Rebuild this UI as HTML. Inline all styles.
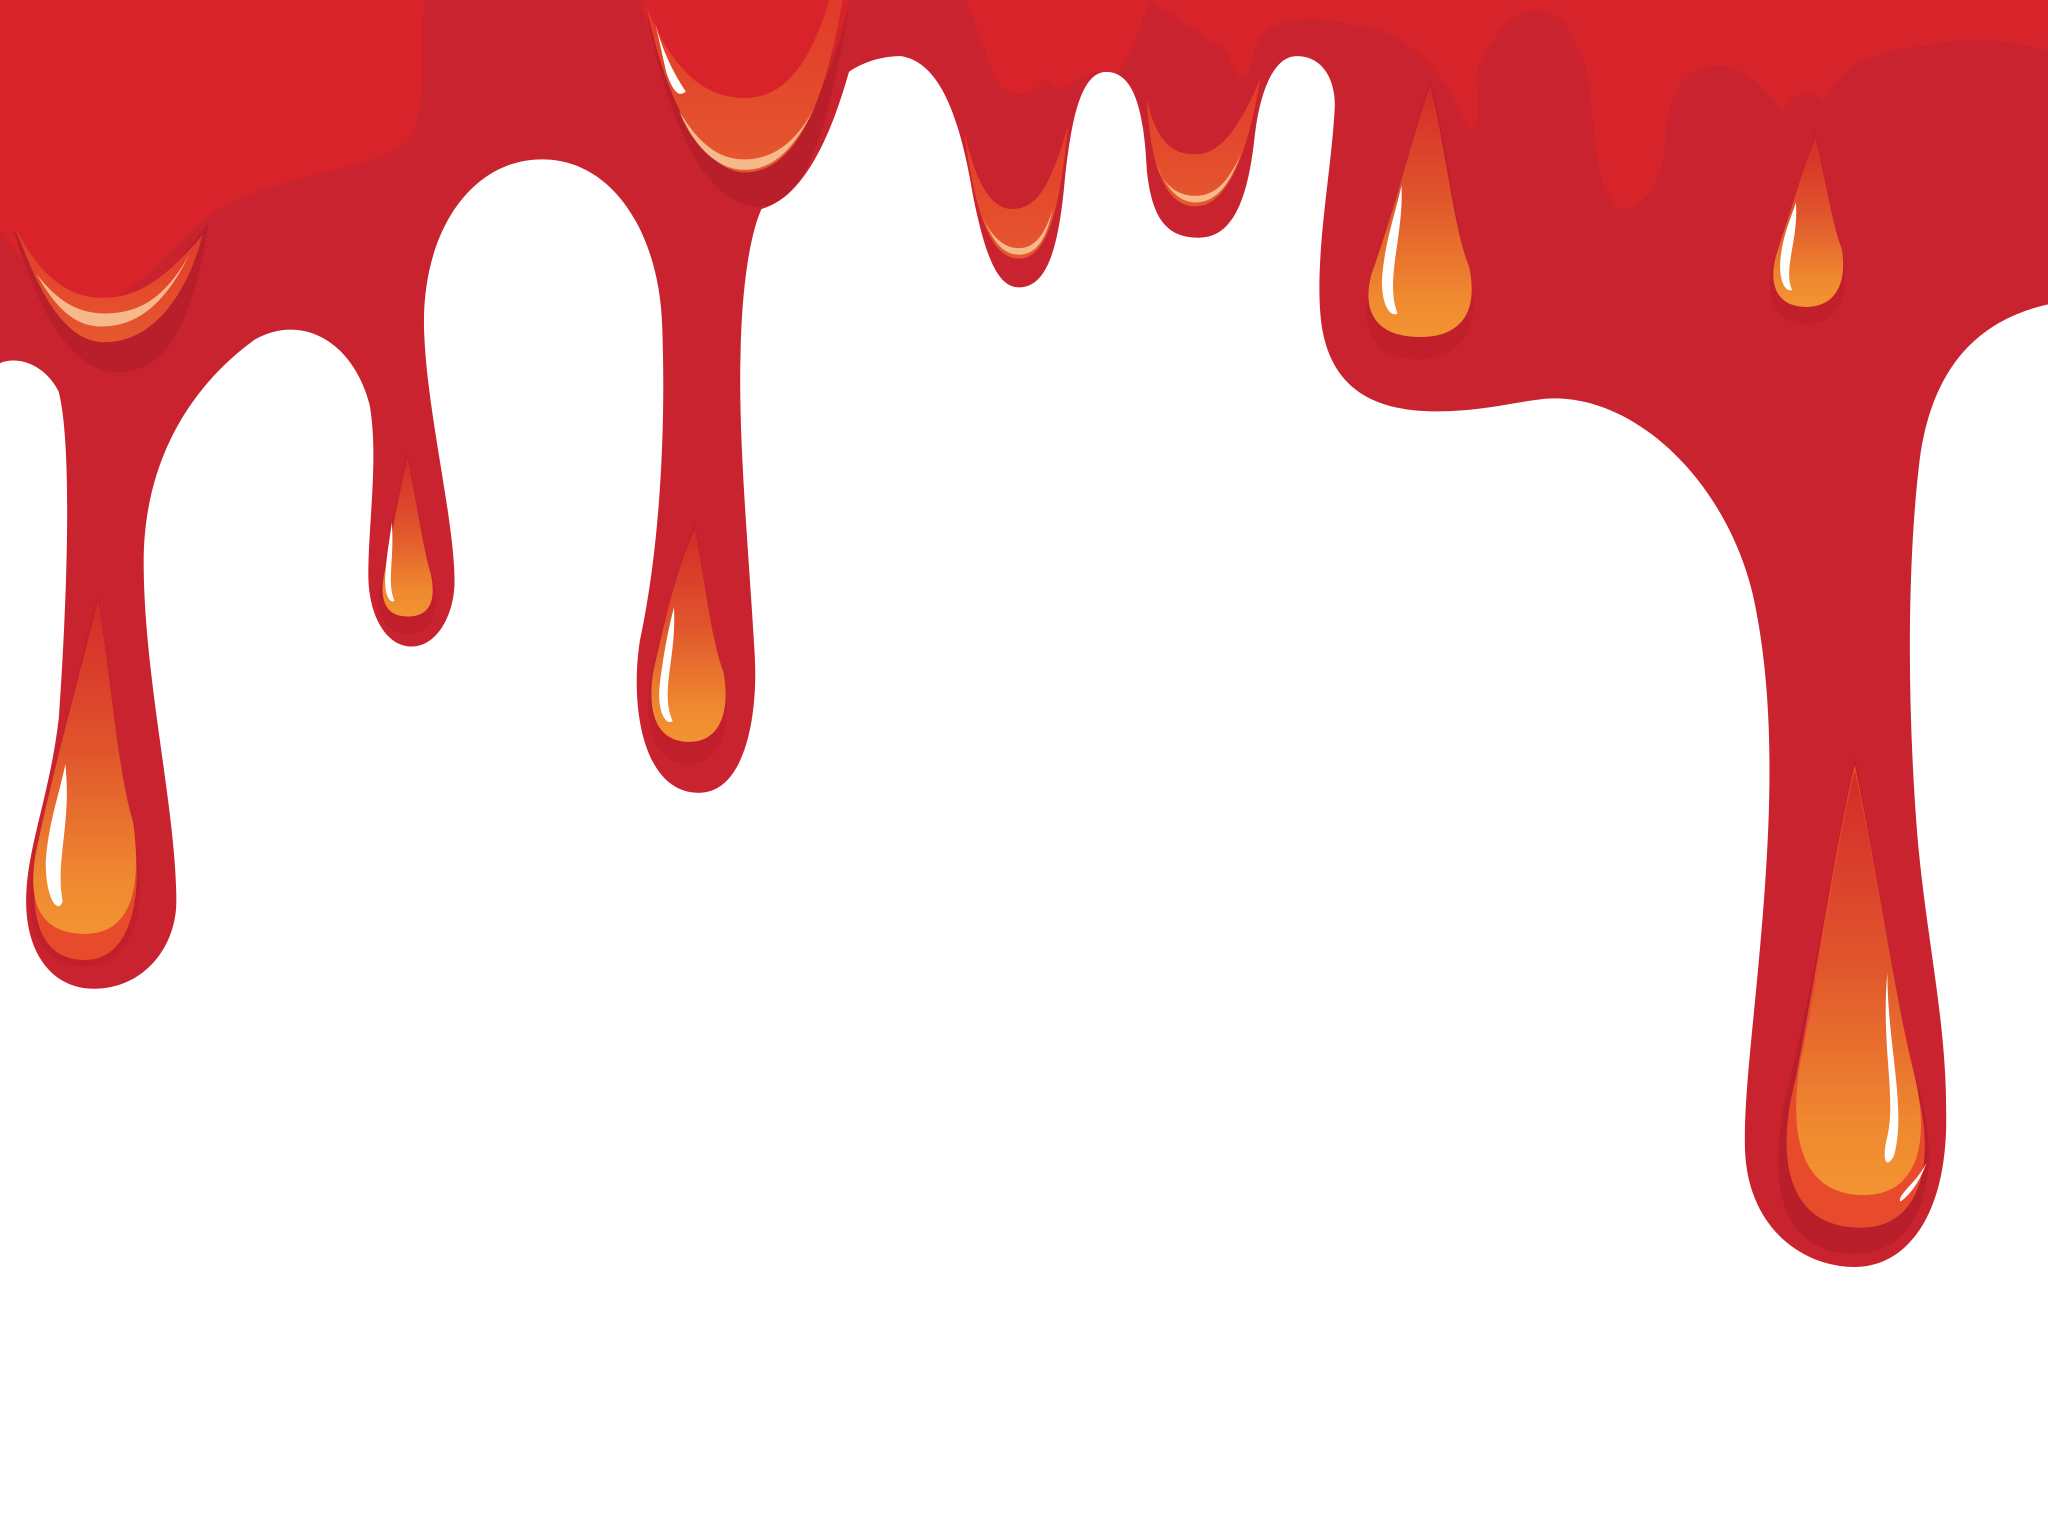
<!DOCTYPE html>
<html><head><meta charset="utf-8"><style>
html,body{margin:0;padding:0;background:#fff;width:2048px;height:1536px;overflow:hidden}
svg{display:block}
</style></head><body>
<svg width="2048" height="1536" viewBox="0 0 1568 1176" preserveAspectRatio="none" xmlns="http://www.w3.org/2000/svg">
<defs>
<linearGradient id="og" x1="0" y1="0" x2="0" y2="1">
<stop offset="0" stop-color="#d42a2a"/>
<stop offset="0.45" stop-color="#e0552c"/>
<stop offset="0.85" stop-color="#f08a30"/>
<stop offset="1" stop-color="#f29332"/>
</linearGradient>
<linearGradient id="bowl" x1="0" y1="0" x2="0" y2="1">
<stop offset="0" stop-color="#e23a2a"/>
<stop offset="1" stop-color="#e5582e"/>
</linearGradient>
</defs>
<path fill="#c9232f" d="M0,278 C15,272 35,280 45,300 C55,340 52,450 45,550 C38,610 20,650 20,690 C20,730 40,757 72,757 C110,757 135,725 135,690 C135,620 110,520 110,430 C110,360 140,300 195,260 C230,240 270,260 283,310 C290,350 282,400 282,440 C282,470 295,495 315,495 C335,495 348,470 348,445 C348,400 328,320 325,260 C320,180 360,122 415,122 C470,122 505,180 507,250 C510,330 505,420 490,490 C482,540 492,607 535,607 C570,607 580,550 578,505 C574,430 565,340 567,270 C568,220 574,180 583,160 C620,150 640,90 650,55 C665,45 680,43 690,43 C720,48 735,90 745,150 C755,200 765,220 780,220 C800,220 810,195 815,140 C820,90 828,55 847,55 C870,55 876,90 878,130 C882,170 895,182 918,182 C945,182 955,150 960,110 C964,70 975,43 993,43 C1012,43 1022,60 1022,80 C1020,130 1005,200 1012,250 C1020,300 1055,315 1100,315 C1140,315 1170,305 1190,305 C1260,305 1330,380 1345,470 C1360,550 1355,640 1348,720 C1342,790 1335,840 1336,880 C1338,940 1380,970 1420,970 C1460,970 1492,930 1490,850 C1490,780 1475,720 1468,640 C1460,540 1460,430 1470,350 C1480,280 1515,245 1568,233 L1568,0 L0,0 Z"/>
<path fill="#d8232a" d="M0,0 L325,0 C320,40 330,90 310,110 C270,135 200,135 160,165 C120,200 100,230 75,230 C40,230 15,200 0,175 Z"/>
<path fill="#d8232a" d="M490,0 L650,0 C640,40 625,80 610,110 C590,135 560,140 540,120 C515,95 500,40 490,0 Z"/>
<path fill="#d8232a" d="M740,0 L880,0 C870,30 860,60 850,55 C825,50 815,80 800,60 C790,75 770,80 760,55 Z"/>
<path fill="#d8232a" d="M880,0 L1568,0 L1568,40 C1540,30 1500,25 1460,40 C1420,60 1415,100 1420,140 L1410,110 C1400,70 1380,60 1365,85 C1350,70 1340,50 1310,50 C1280,55 1275,90 1275,110 C1272,150 1245,175 1225,150 C1215,120 1220,60 1200,20 C1185,0 1150,5 1140,40 C1135,70 1130,120 1120,90 C1100,40 1060,20 1040,20 C1020,15 970,5 960,40 C955,70 945,60 940,40 Z" opacity="0.9"/>
<path fill="#c9232f" d="M1130,60 C1140,10 1190,0 1210,40 C1225,80 1215,140 1240,160 C1260,170 1275,130 1278,90 C1285,50 1320,45 1340,60 C1365,80 1360,130 1370,150 C1380,110 1400,60 1420,50 C1450,30 1530,30 1568,40 L1568,120 C1520,150 1450,200 1400,200 C1300,200 1180,180 1140,150 Z"/>
<!-- top bowls -->
<g>
<path fill="#b81f2a" d="M10,175 C30,240 55,285 90,285 C135,285 150,230 160,170 C130,210 110,230 80,230 C45,230 25,200 10,175Z"/>
<path fill="url(#bowl)" d="M12,175 C30,225 50,262 80,262 C120,262 145,220 155,180 C125,215 105,228 78,228 C45,228 25,200 12,175Z"/>
<path fill="#f6b98a" d="M28,210 C45,240 60,250 78,250 C110,250 130,225 145,195 C125,230 105,240 80,240 C55,240 40,225 28,210Z"/>
<path fill="#b81f2a" d="M495,10 C510,90 540,158 580,158 C620,158 635,90 650,5 C635,70 610,112 575,112 C540,112 515,80 495,10Z"/>
<path fill="url(#bowl)" d="M495,5 C510,80 540,132 570,132 C605,132 630,90 645,0 L635,0 C620,50 600,75 570,75 C540,75 515,55 495,5Z"/>
<path fill="#f6b98a" d="M520,85 C535,110 550,122 570,122 C595,122 612,105 625,80 C610,110 595,130 570,130 C548,130 530,110 520,85Z"/>
<path fill="#fff" d="M500,10 C505,35 515,55 525,70 C520,75 515,70 510,55 Z"/>
<path fill="url(#bowl)" d="M738,100 C745,150 755,198 780,198 C805,198 812,150 818,95 C805,140 795,160 775,160 C755,160 745,130 738,100Z"/>
<path fill="#f6b98a" d="M752,165 C760,185 768,195 780,195 C795,195 802,180 806,160 C800,180 792,190 780,190 C768,190 758,180 752,165Z"/>
<path fill="url(#bowl)" d="M878,75 C880,120 890,158 915,158 C945,158 958,100 965,60 C950,95 935,120 913,118 C893,118 883,100 878,75Z"/>
<path fill="#f6b98a" d="M885,125 C893,145 903,155 915,155 C932,155 942,140 950,118 C940,140 930,150 915,150 C900,150 890,140 885,125Z"/>
</g>
<!-- drops: outer dark, orange body -->
<g>
<path fill="#c11f2b" d="M75,455 C85,520 90,590 103,640 C115,700 100,740 65,740 C25,740 15,700 30,640 C45,580 58,520 75,455Z"/>
<path fill="#e84a2c" d="M75,460 C85,520 90,590 103,640 C110,700 95,735 65,735 C30,735 20,700 30,650 C45,585 60,520 75,460Z"/>
<path fill="url(#og)" d="M75,460 C85,520 90,590 102,630 C110,690 95,715 65,715 C30,715 20,690 28,650 C42,585 60,520 75,460Z"/>
<path fill="#fff" d="M50,585 C55,630 42,660 48,690 C45,700 35,690 35,660 C37,630 45,610 50,585Z"/>

<path fill="#c11f2b" d="M312,345 C320,390 325,420 332,445 C338,475 328,485 312,485 C295,485 285,470 292,445 C300,410 305,380 312,345Z"/>
<path fill="url(#og)" d="M312,350 C320,390 324,420 330,440 C335,465 325,472 312,472 C297,472 290,462 294,440 C300,410 305,380 312,350Z"/>
<path fill="#fff" d="M300,400 C302,430 296,445 302,460 C298,462 294,455 295,440 C296,425 298,415 300,400Z"/>

<path fill="#c11f2b" d="M532,400 C542,460 545,490 555,520 C560,560 550,585 528,585 C502,585 492,560 498,520 C510,470 520,430 532,400Z"/>
<path fill="url(#og)" d="M532,405 C542,460 545,490 554,515 C560,550 548,568 528,568 C505,568 495,550 500,515 C510,470 520,430 532,405Z"/>
<path fill="#fff" d="M516,465 C518,505 505,530 515,552 C510,556 503,545 505,525 C508,500 512,480 516,465Z"/>

<path fill="#c11f2b" d="M1095,60 C1110,120 1115,180 1125,210 C1135,250 1120,275 1085,275 C1050,275 1040,250 1050,215 C1070,160 1080,110 1095,60Z"/>
<path fill="url(#og)" d="M1095,65 C1108,120 1113,175 1125,205 C1132,240 1118,258 1087,258 C1055,258 1042,240 1050,210 C1068,160 1080,110 1095,65Z"/>
<path fill="#fff" d="M1073,142 C1075,180 1060,215 1070,240 C1065,243 1058,235 1058,215 C1060,185 1068,165 1073,142Z"/>

<path fill="#c11f2b" d="M1390,100 C1400,150 1405,175 1410,195 C1418,230 1405,248 1383,248 C1360,248 1350,230 1358,200 C1370,165 1380,130 1390,100Z"/>
<path fill="url(#og)" d="M1390,105 C1400,150 1404,175 1410,190 C1415,220 1403,235 1383,235 C1362,235 1353,220 1360,195 C1370,165 1380,130 1390,105Z"/>
<path fill="#fff" d="M1375,155 C1377,185 1365,205 1372,222 C1367,224 1362,215 1363,200 C1365,180 1370,170 1375,155Z"/>

<path fill="#b81f2a" d="M1420,580 C1440,680 1450,760 1465,820 C1490,890 1475,960 1420,960 C1360,960 1350,900 1372,820 C1395,720 1405,650 1420,580Z"/>
<path fill="#e84a2c" d="M1420,585 C1440,680 1450,760 1465,825 C1485,890 1470,940 1425,940 C1370,940 1358,890 1375,825 C1395,720 1405,650 1420,585Z"/>
<path fill="url(#og)" d="M1420,590 C1440,680 1450,760 1465,820 C1480,880 1465,915 1427,915 C1385,915 1368,880 1378,815 C1398,720 1405,650 1420,590Z"/>
<path fill="#fff" d="M1445,745 C1445,800 1460,850 1450,885 C1445,895 1440,890 1445,870 C1452,840 1440,800 1445,745Z"/>
<path fill="#fff" d="M1475,890 C1470,905 1462,915 1455,920 C1452,915 1468,905 1475,890Z"/>
</g>
</svg>
</body></html>
